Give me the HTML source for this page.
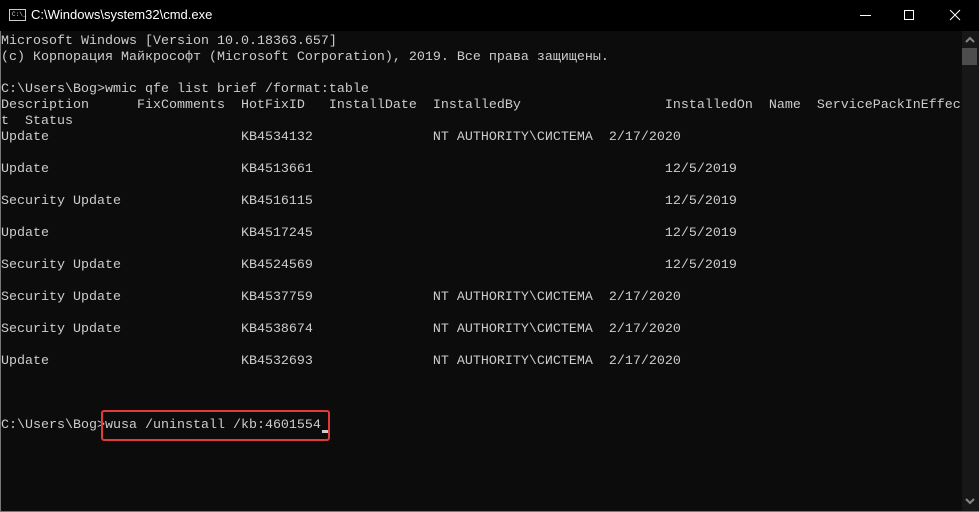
<!DOCTYPE html>
<html><head><meta charset="utf-8"><style>
html,body{margin:0;padding:0;background:#0c0c0c;width:979px;height:512px;overflow:hidden;position:relative}
.title{position:absolute;left:0;top:0;width:979px;height:31px;background:#000}
.ttxt{position:absolute;left:31px;top:7px;color:#fff;font:13px "Liberation Sans",sans-serif}
.icon{position:absolute;left:9px;top:9px;width:15px;height:10px;border:1px solid #ccc;background:#000}
.icon span{position:absolute;left:2px;top:1px;color:#ddd;font:6px "Liberation Mono",monospace}
pre{position:absolute;left:1px;top:34px;margin:0;color:#cccccc;font-family:"Liberation Mono","DejaVu Sans Mono",monospace;font-size:13.33px;line-height:16px;white-space:pre}
.sb{position:absolute;left:962px;top:31px;width:17px;height:480px;background:#171717}
.thumb{position:absolute;left:962px;top:48px;width:15px;height:17px;background:#4d4d4d}
.bl{position:absolute;left:0;top:31px;width:1px;height:481px;background:#777}
.bb{position:absolute;left:0;top:511px;width:979px;height:1px;background:#777}
.box{position:absolute;left:101px;top:410px;width:225px;height:27px;border:2px solid #e53935;border-radius:3px}
.cur{position:absolute;left:322px;top:430px;width:7px;height:3px;background:#ccc}
</style></head><body>
<div class="title"><div class="icon"><span>C:\_</span></div><div class="ttxt">C:\Windows\system32\cmd.exe</div>
<svg style="position:absolute;left:850px;top:8px" width="120" height="16"><line x1="10" y1="7.5" x2="21" y2="7.5" stroke="#fff"/><rect x="54.5" y="2.5" width="9" height="9" fill="none" stroke="#fff"/><path d="M100 2L110 12M110 2L100 12" stroke="#fff"/></svg></div>
<div class="sb"></div><div class="thumb"></div>
<svg style="position:absolute;left:963px;top:35px" width="15" height="10"><path d="M3 7L7 3L11 7" stroke="#888" stroke-width="2" fill="none"/></svg>
<svg style="position:absolute;left:963px;top:497px" width="15" height="10"><path d="M3 2L7 6L11 2" stroke="#888" stroke-width="2" fill="none"/></svg>
<pre>Microsoft Windows [Version 10.0.18363.657]
(c) Корпорация Майкрософт (Microsoft Corporation), 2019. Все права защищены.

C:\Users\Bog&gt;wmic qfe list brief /format:table
Description      FixComments  HotFixID   InstallDate  InstalledBy                  InstalledOn  Name  ServicePackInEffec
t  Status
Update                        KB4534132               NT AUTHORITY\СИСТЕМА  2/17/2020

Update                        KB4513661                                            12/5/2019

Security Update               KB4516115                                            12/5/2019

Update                        KB4517245                                            12/5/2019

Security Update               KB4524569                                            12/5/2019

Security Update               KB4537759               NT AUTHORITY\СИСТЕМА  2/17/2020

Security Update               KB4538674               NT AUTHORITY\СИСТЕМА  2/17/2020

Update                        KB4532693               NT AUTHORITY\СИСТЕМА  2/17/2020



C:\Users\Bog&gt;wusa /uninstall /kb:4601554</pre>
<div class="cur"></div>
<div class="box"></div>
<div class="bl"></div><div class="bb"></div>
</body></html>
